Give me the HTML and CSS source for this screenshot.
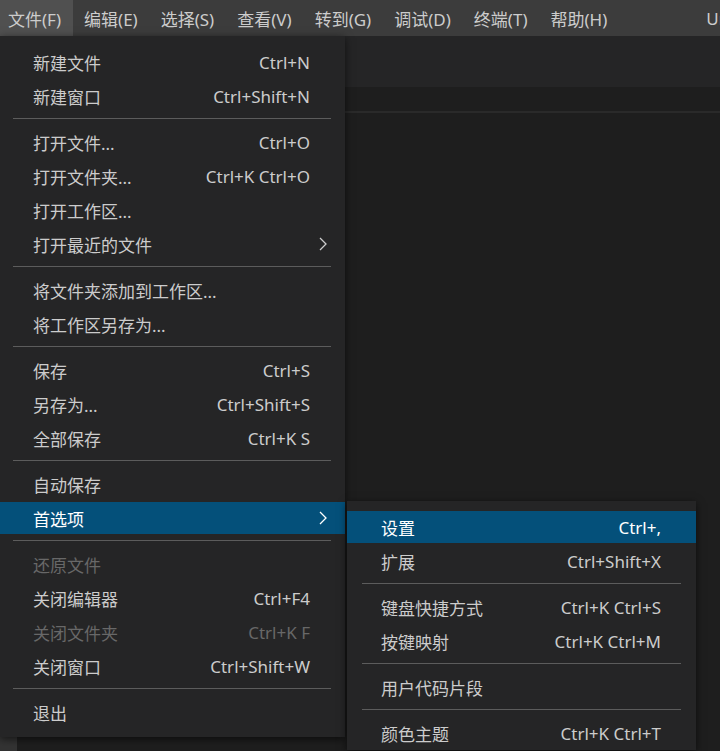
FILE: index.html
```html
<!DOCTYPE html>
<html lang="zh-CN">
<head>
<meta charset="utf-8">
<title>Visual Studio Code</title>
<link rel="stylesheet" href="styles.css">
</head>
<body>
<header class="menubar">
  <span class="mb-item active">文件(F)</span>
  <span class="mb-item">编辑(E)</span>
  <span class="mb-item">选择(S)</span>
  <span class="mb-item">查看(V)</span>
  <span class="mb-item">转到(G)</span>
  <span class="mb-item">调试(D)</span>
  <span class="mb-item">终端(T)</span>
  <span class="mb-item">帮助(H)</span>
  <span class="title">Untitled-1 - Visual Studio Code</span>
</header>
<main class="workbench">
  <div class="activitybar"></div>
  <div class="editor-area">
    <div class="tabs"></div>
    <div class="breadcrumbs"></div>
    <div class="editor"></div>
  </div>
</main>

<ul class="menu main-menu">
  <li class="item"><span>新建文件</span><span class="kb">Ctrl+N</span></li>
  <li class="item"><span>新建窗口</span><span class="kb">Ctrl+Shift+N</span></li>
  <li class="sep"></li>
  <li class="item"><span>打开文件...</span><span class="kb">Ctrl+O</span></li>
  <li class="item"><span>打开文件夹...</span><span class="kb">Ctrl+K Ctrl+O</span></li>
  <li class="item"><span>打开工作区...</span></li>
  <li class="item has-sub"><span>打开最近的文件</span><svg class="chev" viewBox="0 0 8 14" width="8" height="14"><path d="M1 1l6 6-6 6" fill="none" stroke="currentColor" stroke-width="1.3"/></svg></li>
  <li class="sep"></li>
  <li class="item"><span>将文件夹添加到工作区...</span></li>
  <li class="item"><span>将工作区另存为...</span></li>
  <li class="sep"></li>
  <li class="item"><span>保存</span><span class="kb">Ctrl+S</span></li>
  <li class="item"><span>另存为...</span><span class="kb">Ctrl+Shift+S</span></li>
  <li class="item"><span>全部保存</span><span class="kb">Ctrl+K S</span></li>
  <li class="sep"></li>
  <li class="item"><span>自动保存</span></li>
  <li class="item has-sub selected"><span>首选项</span><svg class="chev" viewBox="0 0 8 14" width="8" height="14"><path d="M1 1l6 6-6 6" fill="none" stroke="currentColor" stroke-width="1.3"/></svg></li>
  <li class="sep"></li>
  <li class="item disabled"><span>还原文件</span></li>
  <li class="item"><span>关闭编辑器</span><span class="kb">Ctrl+F4</span></li>
  <li class="item disabled"><span>关闭文件夹</span><span class="kb">Ctrl+K F</span></li>
  <li class="item"><span>关闭窗口</span><span class="kb">Ctrl+Shift+W</span></li>
  <li class="sep"></li>
  <li class="item"><span>退出</span></li>
</ul>

<ul class="menu sub-menu">
  <li class="item selected"><span>设置</span><span class="kb">Ctrl+,</span></li>
  <li class="item"><span>扩展</span><span class="kb">Ctrl+Shift+X</span></li>
  <li class="sep"></li>
  <li class="item"><span>键盘快捷方式</span><span class="kb">Ctrl+K Ctrl+S</span></li>
  <li class="item"><span>按键映射</span><span class="kb">Ctrl+K Ctrl+M</span></li>
  <li class="sep"></li>
  <li class="item"><span>用户代码片段</span></li>
  <li class="sep"></li>
  <li class="item"><span>颜色主题</span><span class="kb">Ctrl+K Ctrl+T</span></li>
</ul>
</body>
</html>
```
FILE: styles.css
```css
html, body {
  margin: 0;
  padding: 0;
  height: 100%;
}
body {
  background: #1e1e1e;
  color: #cccccc;
  font-family: "Noto Sans", "Noto Sans CJK SC", sans-serif;
  font-size: 17px;
  overflow: hidden;
  display: flex;
  flex-direction: column;
}
.menubar {
  height: 36px;
  flex: 0 0 36px;
  background: #3c3c3c;
  display: flex;
  align-items: stretch;
  white-space: nowrap;
  overflow: hidden;
}
.mb-item {
  display: flex;
  align-items: center;
  padding: 0 12px 0 8px;
  margin-right: 3px;
  color: #cccccc;
}
.mb-item.active {
  background: #505050;
}
.title {
  display: flex;
  align-items: center;
  margin-left: 84px;
  color: #cccccc;
}
.workbench {
  flex: 1;
  display: flex;
}
.activitybar {
  width: 17px;
  background: #333333;
}
.editor-area {
  flex: 1;
  display: flex;
  flex-direction: column;
}
.tabs {
  height: 51px;
  background: #252526;
}
.breadcrumbs {
  height: 24px;
  background: #1e1e1e;
  border-bottom: 2px solid #2a2a2a;
}
.editor {
  flex: 1;
  background: #1e1e1e;
}
.menu {
  position: absolute;
  margin: 0;
  list-style: none;
  background: #252526;
  box-shadow: 0 2px 8px rgba(0, 0, 0, 0.6);
  display: flex;
  flex-direction: column;
}
.main-menu {
  left: 0;
  top: 36px;
  width: 345px;
  padding: 9px 0 8px;
}
.sub-menu {
  left: 347px;
  top: 501px;
  width: 349px;
  padding: 9px 0 0;
}
.item {
  flex: 0 0 32px;
  height: 32px;
  margin: 1px 0;
  display: flex;
  align-items: center;
  justify-content: space-between;
  padding: 0 35px 0 33px;
  color: #cccccc;
  white-space: nowrap;
}
.sub-menu .item {
  padding: 0 35px 0 34px;
}
.item.has-sub {
  padding-right: 18px;
}
.item.selected {
  background: #04507a;
  color: #ffffff;
}
.item.disabled {
  color: #686868;
}
.chev {
  display: block;
}
.sep {
  flex: 0 0 1px;
  height: 1px;
  background: #5c5c5c;
  margin: 5px 14px 6px 13px;
}
.sub-menu .sep {
  margin: 5px 15px 6px 15px;
}
```
